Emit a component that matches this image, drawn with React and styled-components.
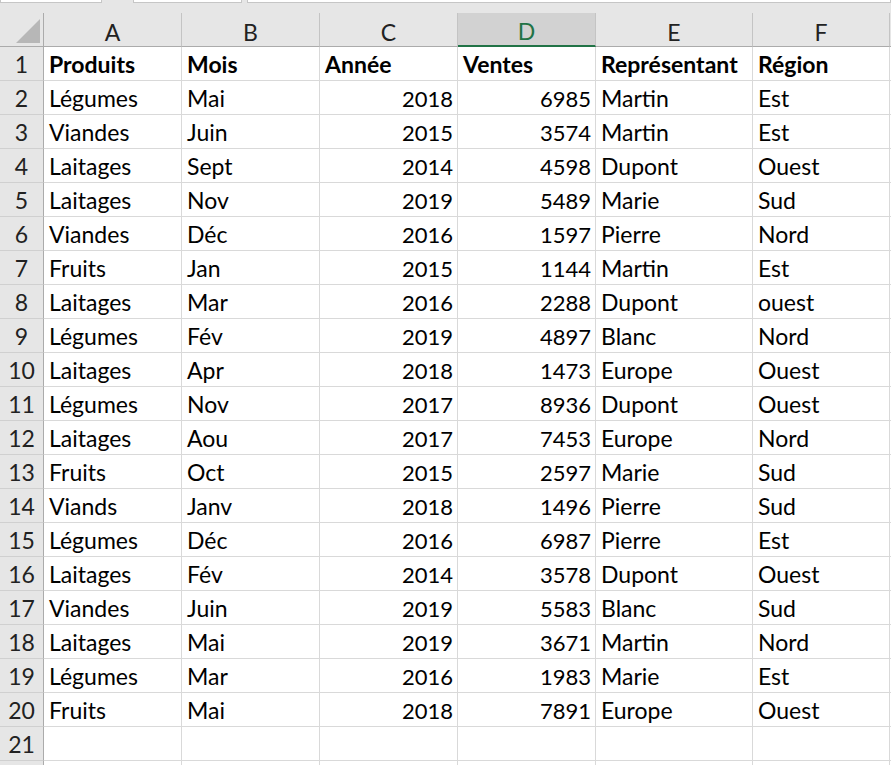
import styled, { createGlobalStyle } from "styled-components";

const GlobalStyle = createGlobalStyle`
  html, body {
    margin: 0;
    padding: 0;
    background: #ffffff;
    overflow: hidden;
  }
  body {
    font-family: Lato, "Open Sans", sans-serif;
  }
`;

const COLS = [
  { key: "A", width: 138 },
  { key: "B", width: 138 },
  { key: "C", width: 138, right: true },
  { key: "D", width: 138, right: true },
  { key: "E", width: 157 },
  { key: "F", width: 137 },
];

const HEAD = ["Produits", "Mois", "Année", "Ventes", "Représentant", "Région"];

const DATA = [
  ["Légumes", "Mai", "2018", "6985", "Martin", "Est"],
  ["Viandes", "Juin", "2015", "3574", "Martin", "Est"],
  ["Laitages", "Sept", "2014", "4598", "Dupont", "Ouest"],
  ["Laitages", "Nov", "2019", "5489", "Marie", "Sud"],
  ["Viandes", "Déc", "2016", "1597", "Pierre", "Nord"],
  ["Fruits", "Jan", "2015", "1144", "Martin", "Est"],
  ["Laitages", "Mar", "2016", "2288", "Dupont", "ouest"],
  ["Légumes", "Fév", "2019", "4897", "Blanc", "Nord"],
  ["Laitages", "Apr", "2018", "1473", "Europe", "Ouest"],
  ["Légumes", "Nov", "2017", "8936", "Dupont", "Ouest"],
  ["Laitages", "Aou", "2017", "7453", "Europe", "Nord"],
  ["Fruits", "Oct", "2015", "2597", "Marie", "Sud"],
  ["Viands", "Janv", "2018", "1496", "Pierre", "Sud"],
  ["Légumes", "Déc", "2016", "6987", "Pierre", "Est"],
  ["Laitages", "Fév", "2014", "3578", "Dupont", "Ouest"],
  ["Viandes", "Juin", "2019", "5583", "Blanc", "Sud"],
  ["Laitages", "Mai", "2019", "3671", "Martin", "Nord"],
  ["Légumes", "Mar", "2016", "1983", "Marie", "Est"],
  ["Fruits", "Mai", "2018", "7891", "Europe", "Ouest"],
  ["", "", "", "", "", ""],
];

const gridTemplate = `44px ${COLS.map((c) => c.width + "px").join(" ")} 1fr`;

const Page = styled.div`
  width: 891px;
  height: 765px;
  overflow: hidden;
  background: #e6e6e6;
  display: flex;
  flex-direction: column;
`;

const FormulaStrip = styled.div`
  flex: none;
  height: 13px;
  display: flex;
  align-items: flex-start;
`;

const StripBox = styled.div`
  height: 3px;
  width: ${(p) => (p.w ? p.w + "px" : "auto")};
  flex: ${(p) => (p.w ? "none" : "1")};
  margin-right: ${(p) => p.gap || 0}px;
  background: #ffffff;
  border: 1px solid #c6c6c6;
  border-top: none;
  box-sizing: border-box;
`;

const Sheet = styled.div`
  flex: none;
  display: grid;
  grid-template-columns: ${gridTemplate};
  grid-auto-rows: 34px;
  background: #ffffff;
`;

const Corner = styled.div`
  position: relative;
  background: #e6e6e6;
  border-right: 1px solid #ababab;
  border-bottom: 1px solid #ababab;
  box-sizing: border-box;
`;

const Triangle = styled.div`
  position: absolute;
  right: 3px;
  bottom: 3px;
  width: 0;
  height: 0;
  border-left: 24px solid transparent;
  border-bottom: 24px solid #b7b7b7;
`;

const ColHead = styled.div`
  background: ${(p) => (p.selected ? "#d2d2d2" : "#e6e6e6")};
  color: ${(p) => (p.selected ? "#217346" : "#222222")};
  border-right: 1px solid #c4c4c4;
  border-bottom: ${(p) => (p.selected ? "2px solid #217346" : "1px solid #ababab")};
  box-sizing: border-box;
  display: flex;
  align-items: center;
  justify-content: center;
  padding-top: 4px;
  font-size: 23px;
`;

const Filler = styled.div`
  background: ${(p) => (p.head ? "#e6e6e6" : "#ffffff")};
  border-bottom: 1px solid ${(p) => (p.head ? "#ababab" : "#d9d9d9")};
  box-sizing: border-box;
`;

const RowHead = styled.div`
  background: #e6e6e6;
  color: #222222;
  border-right: 1px solid #ababab;
  border-bottom: 1px solid #d0d0d0;
  box-sizing: border-box;
  display: flex;
  align-items: center;
  justify-content: center;
  padding-top: 1px;
  font-size: 23px;
`;

const Cell = styled.div`
  border-right: 1px solid #d9d9d9;
  border-bottom: 1px solid #d9d9d9;
  box-sizing: border-box;
  display: flex;
  align-items: center;
  justify-content: ${(p) => (p.right ? "flex-end" : "flex-start")};
  padding: 1px 4px 0 5px;
  font-size: ${(p) => (p.right ? 22 : 23)}px;
  font-weight: ${(p) => (p.bold ? 700 : 400)};
  color: #000000;
  white-space: nowrap;
  overflow: hidden;
`;

const App = () => {
  const rows = [HEAD, ...DATA];
  return (
    <Page>
      <GlobalStyle />
      <FormulaStrip>
        <StripBox w={102} gap={31} />
        <StripBox w={109} gap={5} />
        <StripBox />
      </FormulaStrip>
      <Sheet>
        <Corner>
          <Triangle />
        </Corner>
        {COLS.map((c) => (
          <ColHead key={c.key} selected={c.key === "D"}>
            {c.key}
          </ColHead>
        ))}
        <Filler head />
        {rows.map((row, i) => (
          <Row key={i} index={i + 1} values={row} bold={i === 0} />
        ))}
        <RowHead />
        {COLS.map((c) => (
          <Cell key={c.key} />
        ))}
        <Filler />
      </Sheet>
    </Page>
  );
};

const Row = ({ index, values, bold }) => (
  <>
    <RowHead>{index}</RowHead>
    {values.map((v, j) => (
      <Cell key={j} bold={bold} right={!bold && COLS[j].right}>
        {v}
      </Cell>
    ))}
    <Filler />
  </>
);

export default App;
